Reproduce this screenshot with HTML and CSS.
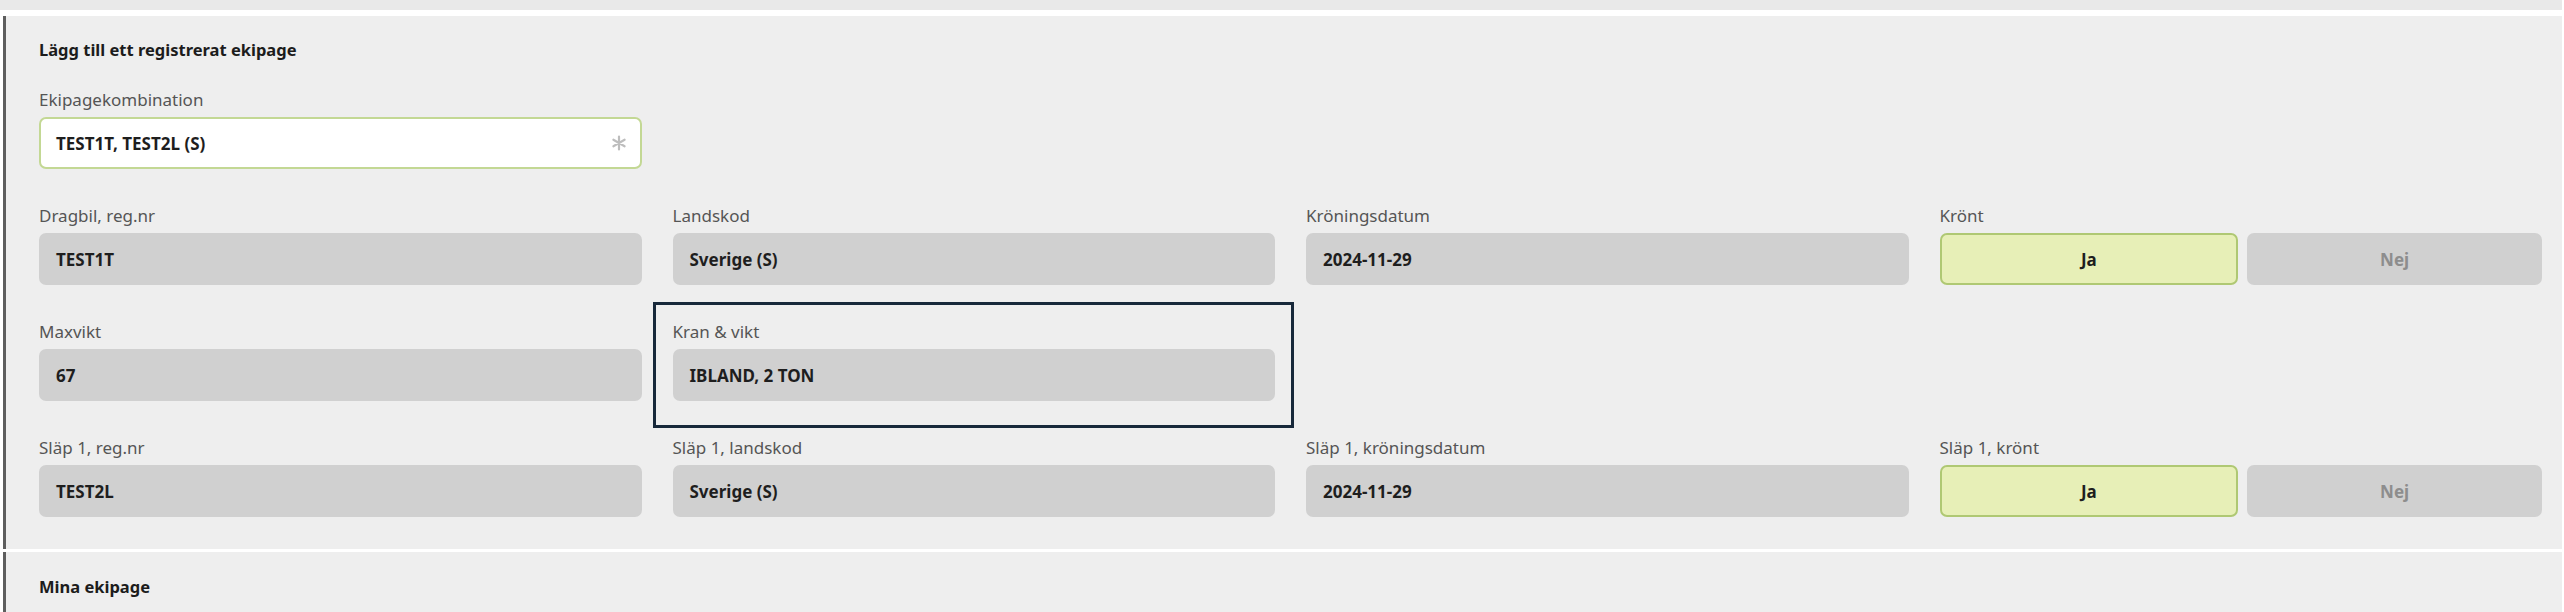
FILE: index.html
```html
<!DOCTYPE html>
<html lang="sv">

<head>
  <meta charset="UTF-8">
  <title>Lägg till ett registrerat ekipage</title>
  <link rel="stylesheet" href="styles.css">
</head>

<body>
  <div class="prev-section"></div>

  <section class="panel">
    <h2 class="panel-title">Lägg till ett registrerat ekipage</h2>

    <div class="form-grid">
      <div class="group">
        <div class="label">Ekipagekombination</div>
        <div class="input">
          <span>TEST1T, TEST2L (S)</span>
          <svg class="required" width="16" height="16" viewBox="0 0 16 16">
            <path d="M8 1.5v13M2.4 4.75l11.2 6.5M2.4 11.25l11.2-6.5" stroke="#bdbdbd" stroke-width="2.2"
              stroke-linecap="round" />
          </svg>
        </div>
      </div>

      <div class="group first">
        <div class="label">Dragbil, reg.nr</div>
        <div class="field">TEST1T</div>
      </div>
      <div class="group">
        <div class="label">Landskod</div>
        <div class="field">Sverige (S)</div>
      </div>
      <div class="group">
        <div class="label">Kröningsdatum</div>
        <div class="field">2024-11-29</div>
      </div>
      <div class="group">
        <div class="label">Krönt</div>
        <div class="toggle">
          <div class="toggle-btn active">Ja</div>
          <div class="toggle-btn">Nej</div>
        </div>
      </div>

      <div class="group first">
        <div class="label">Maxvikt</div>
        <div class="field">67</div>
      </div>
      <div class="group highlight">
        <div class="label">Kran &amp; vikt</div>
        <div class="field">IBLAND, 2 TON</div>
      </div>

      <div class="group first">
        <div class="label">Släp 1, reg.nr</div>
        <div class="field">TEST2L</div>
      </div>
      <div class="group">
        <div class="label">Släp 1, landskod</div>
        <div class="field">Sverige (S)</div>
      </div>
      <div class="group">
        <div class="label">Släp 1, kröningsdatum</div>
        <div class="field">2024-11-29</div>
      </div>
      <div class="group">
        <div class="label">Släp 1, krönt</div>
        <div class="toggle">
          <div class="toggle-btn active">Ja</div>
          <div class="toggle-btn">Nej</div>
        </div>
      </div>
    </div>
  </section>

  <section class="panel panel-next">
    <h2 class="panel-title">Mina ekipage</h2>
  </section>
</body>

</html>
```

FILE: styles.css
```css
body {
  margin: 0;
  background: #fff;
  font-family: "Noto Sans", "Open Sans", sans-serif;
  color: #222;
}

.prev-section {
  height: 10px;
  background: #e9e9e9;
  margin-right: 2px;
}

.panel {
  margin: 6px 2px 0 3px;
  border-left: 3px solid #5e5e5e;
  background: #eeeeee;
  padding: 24px 20px 32px 33px;
}

.panel-next {
  margin-top: 3px;
  padding-top: 25px;
  padding-bottom: 20px;
}

.panel-title {
  margin: 0 0 29px;
  font-size: 16.5px;
  line-height: 20px;
  font-weight: 700;
  color: #1c1c1c;
}

.panel-next .panel-title {
  margin: 0;
}

.form-grid {
  display: grid;
  grid-template-columns: repeat(4, 1fr);
  column-gap: 31px;
  row-gap: 36px;
}

.group {
  position: relative;
  display: flex;
  flex-direction: column;
  gap: 6px;
}

.group.first {
  grid-column-start: 1;
}

.label {
  font-size: 17px;
  line-height: 22px;
  color: #555;
}

.field,
.input {
  height: 52px;
  box-sizing: border-box;
  border-radius: 7px;
  padding: 0 17px;
  display: flex;
  align-items: center;
  font-size: 17px;
  font-weight: 700;
  color: #1e1e1e;
}

.field {
  background: #d0d0d0;
}

.input {
  background: #fff;
  border: 2px solid #c3d894;
  padding-left: 15px;
  justify-content: space-between;
}

.required {
  margin-right: -4px;
}

.toggle {
  display: flex;
  gap: 9px;
}

.toggle-btn {
  flex: 1;
  height: 52px;
  box-sizing: border-box;
  border-radius: 7px;
  background: #d0d0d0;
  display: flex;
  align-items: center;
  justify-content: center;
  font-size: 17px;
  font-weight: 700;
  color: #8d8d8d;
}

.toggle-btn.active {
  background: #e7efb7;
  border: 2px solid #afc873;
  color: #1e1e1e;
}

/* annotation frame around the crane field */
.highlight::after {
  content: "";
  position: absolute;
  top: -19px;
  left: -20px;
  right: -19px;
  bottom: -27px;
  border: 3px solid #17283a;
  pointer-events: none;
}
```
